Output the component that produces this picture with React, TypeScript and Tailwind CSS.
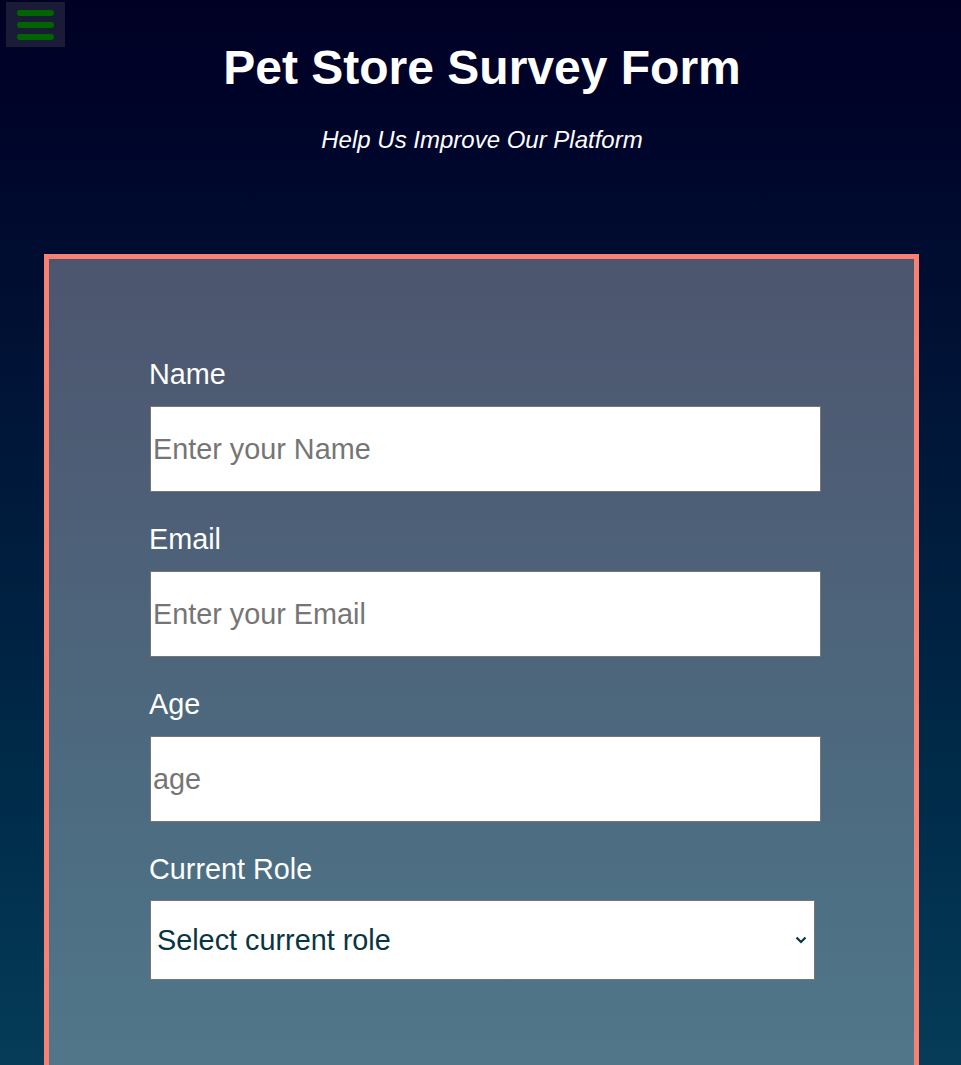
const fields = [
  { id: "name", label: "Name", type: "text", placeholder: "Enter your Name" },
  { id: "email", label: "Email", type: "email", placeholder: "Enter your Email" },
  { id: "number", label: "Age", type: "number", placeholder: "age" },
];

const App = () => {
  return (
    <div className="min-h-screen bg-fixed bg-gradient-to-b from-[#000024] to-[#063c57] font-['Liberation_Sans',Arial,sans-serif] text-white">
      {/* Menu button */}
      <button className="absolute left-[6px] top-[2px] w-[59px] h-[45px] bg-[#1a1b36] flex flex-col items-center justify-center gap-[6px]">
        <span className="block w-[37px] h-[6px] rounded-full bg-[#006400]" />
        <span className="block w-[37px] h-[6px] rounded-full bg-[#006400]" />
        <span className="block w-[37px] h-[6px] rounded-full bg-[#006400]" />
      </button>

      {/* Header */}
      <header className="text-center pt-[40px]">
        <h1 className="text-[48px] leading-[55px] font-bold pl-[3px]">Pet Store Survey Form</h1>
        <p className="mt-[31px] text-[24px] leading-[28px] italic pl-[3px]">Help Us Improve Our Platform</p>
      </header>

      {/* Survey card */}
      <form className="mt-[100px] ml-[44px] w-[875px] border-[5px] border-[#fa8072] bg-white/30 pt-[99px] pl-[101px] pb-[140px]">
        {fields.map((f) => (
          <div key={f.id} className="mb-[31px]">
            <label htmlFor={f.id} className="block text-[28.8px] leading-[33px] mb-[15px] -ml-[1px]">
              {f.label}
            </label>
            <input
              id={f.id}
              type={f.type}
              placeholder={f.placeholder}
              className="block w-[671px] h-[86px] bg-white border border-[#767676] px-[2px] text-[28.8px] text-black placeholder:text-[#757575] [appearance:textfield]"
            />
          </div>
        ))}
        <div>
          <label htmlFor="role" className="block text-[28.8px] leading-[33px] mb-[14px] -ml-[1px]">
            Current Role
          </label>
          <div className="relative w-[665px]">
            <select
              id="role"
              defaultValue=""
              className="block w-full h-[80px] appearance-none bg-white border border-[#767676] pl-[6px] pr-[30px] pt-[2px] text-[28.8px] text-[#073642]"
            >
              <option value="" disabled>
                Select current role
              </option>
              <option value="student">Student</option>
              <option value="full-time">Full Time Job</option>
              <option value="learner">Full Time Learner</option>
              <option value="other">Other</option>
            </select>
            <svg
              className="pointer-events-none absolute right-[8px] top-[36px]"
              width="12"
              height="8"
              viewBox="0 0 12 8"
              fill="none"
            >
              <path d="M1.5 1.5l4.5 4.5 4.5-4.5" stroke="#073642" strokeWidth="2.2" />
            </svg>
          </div>
        </div>
      </form>
    </div>
  );
};

export default App;
